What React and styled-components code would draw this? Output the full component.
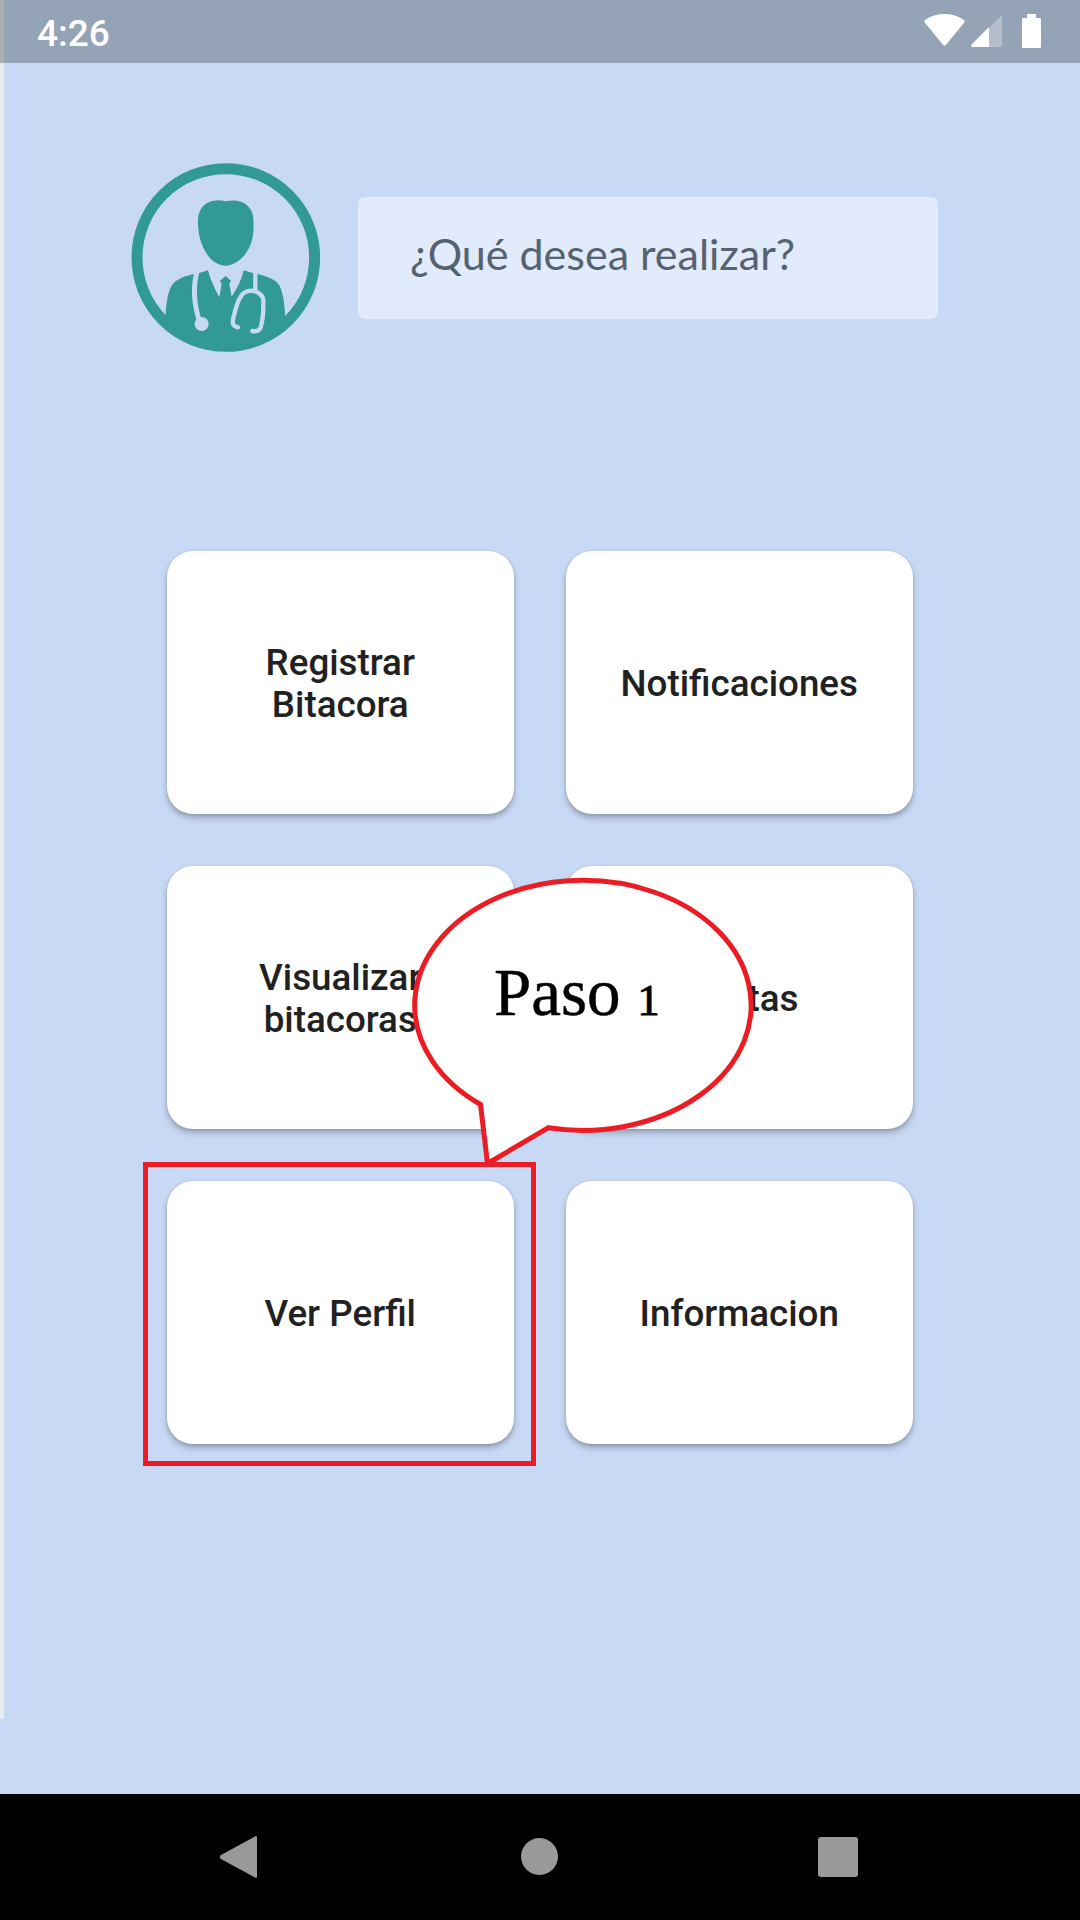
import React from "react";
import styled, { createGlobalStyle } from "styled-components";

const GlobalStyle = createGlobalStyle`
  * { box-sizing: border-box; }
  body { margin: 0; background: #c8d9f5; }
`;

const Screen = styled.div`
  position: relative;
  display: flex;
  flex-direction: column;
  width: 1080px;
  height: 1920px;
  overflow: hidden;
  background: #c8d9f5;
  font-family: Roboto, "Liberation Sans", sans-serif;
`;

const StatusBar = styled.header`
  display: flex;
  align-items: flex-start;
  justify-content: space-between;
  height: 63px;
  padding: 0 39px 0 37px;
  background: #95a3b6;
`;

const Clock = styled.time`
  padding-top: 12px;
  font-size: 37px;
  line-height: 44px;
  font-weight: 500;
  color: #fff;
`;

const StatusIcons = styled.svg`
  display: block;
  width: 117px;
  height: 34px;
  margin-top: 14px;
`;

const Content = styled.main`
  flex: 1;
  display: flex;
  flex-direction: column;
  padding: 100px 0 0 131px;
`;

const Header = styled.section`
  display: flex;
  align-items: center;
  gap: 38px;
  height: 189px;
`;

const Avatar = styled.svg`
  flex: none;
  width: 189px;
  height: 189px;
`;

const Prompt = styled.div`
  width: 580px;
  height: 122px;
  padding: 32px 0 0 52px;
  border-radius: 7px;
  background: #e2ebfb;
  color: #56626f;
  font-family: Lato, sans-serif;
  font-size: 43px;
  line-height: 50px;
  white-space: nowrap;
`;

const Menu = styled.nav`
  display: grid;
  grid-template-columns: repeat(2, 346.5px);
  grid-auto-rows: 262.5px;
  gap: 52.5px;
  margin: 199px 0 0 36px;
`;

const MenuCard = styled.button`
  display: flex;
  align-items: center;
  justify-content: center;
  padding: 4px 84px 0;
  border: 0;
  border-radius: 26px;
  background: #fff;
  box-shadow: 0 4px 6px rgba(0, 0, 0, 0.24), 0 1px 3px rgba(0, 0, 0, 0.12);
  color: #212121;
  font-family: inherit;
  font-size: 36.75px;
  line-height: 42px;
  font-weight: 500;
  text-align: center;
  white-space: pre-line;
`;

const NavBar = styled.footer`
  display: flex;
  align-items: center;
  justify-content: space-between;
  height: 126px;
  padding: 0 222px 0 219px;
  background: #000;
`;

const NavIcon = styled.svg`
  display: block;
  width: 40px;
  height: 44px;
  fill: #999;
`;

const EdgeStrip = styled.div`
  position: absolute;
  left: 0;
  top: 0;
  width: 4px;
  height: 1719px;
  background: linear-gradient(#adadb0 0 63px, #e8ebf0 63px);
`;

const Highlight = styled.div`
  position: absolute;
  left: 143px;
  top: 1162px;
  width: 393px;
  height: 304px;
  border: 5px solid #ed1c24;
`;

const Callout = styled.div`
  position: absolute;
  left: 411px;
  top: 877px;
  width: 343px;
  height: 290px;
`;

const Bubble = styled.svg`
  position: absolute;
  inset: 0;
  width: 343px;
  height: 290px;
`;

const CalloutText = styled.div`
  position: relative;
  padding: 77px 0 0 83px;
  font-family: "Liberation Serif", serif;
  font-size: 67px;
  line-height: 76px;
  color: #000;
  -webkit-text-stroke: 0.5px #000;
  white-space: pre;
`;

const OldStyleFigure = styled.span`
  font-size: 45px;
  -webkit-text-stroke: 0.9px #000;
`;

const items = [
  "Registrar\nBitacora",
  "Notificaciones",
  "Visualizar\nbitacoras",
  "Alertas",
  "Ver Perfil",
  "Informacion",
];

function DoctorAvatar() {
  return (
    <Avatar viewBox="33 39 567 567">
      <defs>
        <clipPath id="disc">
          <circle cx="317.5" cy="322.5" r="270" />
        </clipPath>
      </defs>
      <circle cx="317.5" cy="322.5" r="266.5" fill="none" stroke="#319a98" strokeWidth="33" />
      <path
        fill="#319a98"
        d="M318 154 C345 147 373 154 388 173 C403 190 401 220 400 246 C397 302 355 347 317 347 C275 347 237 296 234 226 C232 195 239 174 260 160 C278 149 299 149 318 154 Z"
      />
      <g clipPath="url(#disc)">
        <path
          fill="#319a98"
          d="M136 502 C139 456 145 412 162 398 C179 382 207 375 238 369 L264 361 C270 388 284 416 298 442 L305 402 L299 393 L317 378 L333 392 L328 402 L335 440 C352 416 365 388 371 361 L399 369 C430 375 457 385 471 397 C488 413 494 462 496 502 L496 620 L136 620 Z"
        />
      </g>
      <g fill="none" stroke="#c8d9f5" strokeLinecap="round">
        <path strokeWidth="15" strokeLinecap="butt" d="M231 365 C220 405 222 460 237 510" />
        <path strokeWidth="13" strokeLinecap="butt" d="M406 362 L406 420" />
        <path
          strokeWidth="13"
          d="M354 532 C338 528 336 520 340 504 C346 478 352 454 362 440 C374 420 401 417 419 431 C431 440 431 451 430 466 C430 492 427 515 422 532 C418 544 408 545 397 543"
        />
      </g>
      <circle cx="245" cy="522" r="21" fill="#c8d9f5" />
    </Avatar>
  );
}

export default function App() {
  return (
    <>
      <GlobalStyle />
      <Screen>
        <StatusBar>
          <Clock>4:26</Clock>
          <StatusIcons viewBox="0 0 117 34">
            <path
              fill="#fff"
              d="M0.7 8.4 Q-0.4 7 1.2 5.9 Q9.5 0 20.5 0 Q31.5 0 39.8 5.9 Q41.4 7 40.3 8.4 L21.8 31 Q20.5 32.5 19.2 31 Z"
            />
            <path fill="#fff" fillOpacity="0.3" d="M65 14.3 L76.4 2.5 Q78 1.2 78 3 V31.5 Q78 33 76.5 33 H65 Z" />
            <path fill="#fff" d="M65 13 V33 H48 Q46.5 32 47.6 30.6 Z" />
            <path
              fill="#fff"
              d="M103 0 H112 V4 H115.7 Q117 4 117 5.3 V32.5 Q117 34 115.7 34 H99.3 Q98 34 98 32.5 V5.3 Q98 4 99.3 4 H103 Z"
            />
          </StatusIcons>
        </StatusBar>
        <Content>
          <Header>
            <DoctorAvatar />
            <Prompt>¿Qué desea realizar?</Prompt>
          </Header>
          <Menu>
            {items.map((label) => (
              <MenuCard key={label}>{label}</MenuCard>
            ))}
          </Menu>
        </Content>
        <NavBar>
          <NavIcon viewBox="0 0 40 44">
            <path d="M36 1.4 Q38 0.4 38 2.6 V41.4 Q38 43.6 36 42.6 L2 24 Q-0.4 22 2 20 Z" />
          </NavIcon>
          <NavIcon viewBox="0 0 40 44">
            <circle cx="20.5" cy="21.5" r="18.5" />
          </NavIcon>
          <NavIcon viewBox="0 0 40 44">
            <rect x="0" y="2" width="40" height="40" rx="3" />
          </NavIcon>
        </NavBar>
        <EdgeStrip />
        <Callout>
          <Bubble viewBox="411 877 343 290">
            <path
              fill="#fff"
              stroke="#ed1c24"
              strokeWidth="5"
              d="M480.5 1104.5 A168.2 125 0 1 1 548.5 1127.7 L487.5 1163.5 Z"
            />
          </Bubble>
          <CalloutText>
            Paso <OldStyleFigure>1</OldStyleFigure>
          </CalloutText>
        </Callout>
        <Highlight />
      </Screen>
    </>
  );
}
